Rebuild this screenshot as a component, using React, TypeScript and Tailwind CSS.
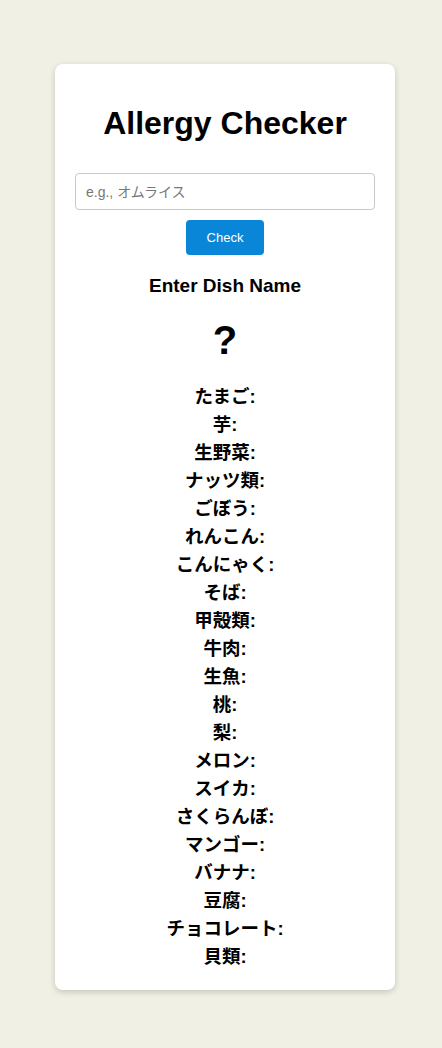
const allergens = [
  "たまご",
  "芋",
  "生野菜",
  "ナッツ類",
  "ごぼう",
  "れんこん",
  "こんにゃく",
  "そば",
  "甲殻類",
  "牛肉",
  "生魚",
  "桃",
  "梨",
  "メロン",
  "スイカ",
  "さくらんぼ",
  "マンゴー",
  "バナナ",
  "豆腐",
  "チョコレート",
  "貝類",
];

export default function App() {
  return (
    <div className="min-h-screen bg-[#f1f0e4] pt-[64px] pb-[58px] pl-2 font-['Liberation_Sans','Noto_Sans_CJK_JP',sans-serif] text-black">
      <div className="w-[340px] mx-auto bg-white rounded-lg shadow-[0_2px_6px_rgba(0,0,0,0.18)] px-5 pt-5 pb-[19px] text-center">
        {/* Title */}
        <h1 className="text-[32px] font-bold leading-[37px] mt-[21px] mb-[31px]">
          Allergy Checker
        </h1>

        {/* Input + button */}
        <input
          type="text"
          placeholder="e.g., オムライス"
          className="block w-full h-[37px] border border-[#c9c9c9] rounded px-[10px] text-[14px] placeholder:text-[#777] outline-none"
        />
        <button className="mt-[10px] h-[35px] w-[78px] bg-[#0a86d8] text-white text-[13px] rounded">
          Check
        </button>

        {/* Result */}
        <h3 className="mt-5 text-[19px] font-bold leading-[22px]">
          Enter Dish Name
        </h3>
        <div className="mt-5 text-[40px] font-bold leading-[46px]">?</div>

        {/* Allergen list */}
        <ul className="mt-5">
          {allergens.map((name) => (
            <li key={name} className="text-[18.5px] font-bold leading-[28px]">
              {name}:
            </li>
          ))}
        </ul>
      </div>
    </div>
  );
}
